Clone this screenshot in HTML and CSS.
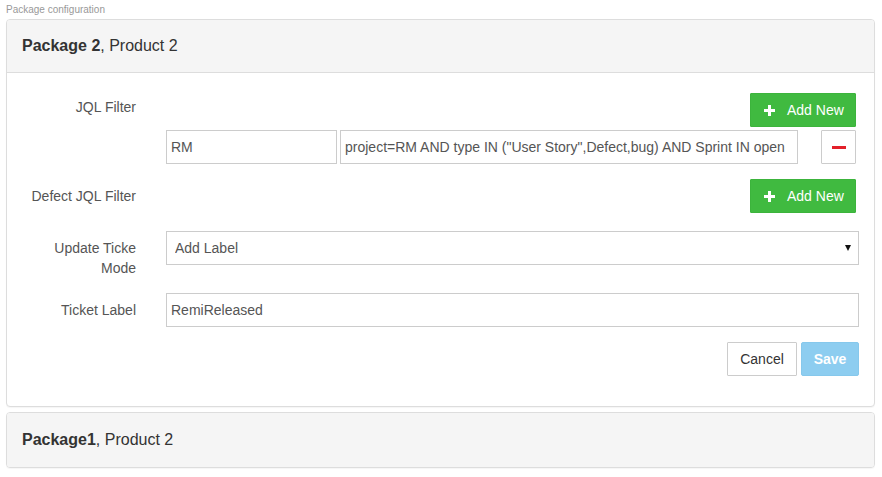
FILE: index.html
```html
<!DOCTYPE html>
<html>
<head>
<meta charset="utf-8">
<link rel="stylesheet" href="styles.css">
</head>
<body>
<div class="page">
  <div class="caption">Package configuration</div>
  <div class="panel">
    <div class="panel-heading"><b>Package 2</b>, Product 2</div>
    <div class="panel-body">
      <div class="row row-jql">
        <label class="label label-jql">JQL Filter</label>
        <div class="control control-end">
          <button class="btn btn-add"><span class="plus"></span>Add New</button>
        </div>
      </div>
      <div class="row row-sub">
        <span></span>
        <div class="control control-split">
          <div class="pair">
            <input class="input input-key" type="text" value="RM">
            <input class="input input-query" type="text" value='project=RM AND type IN ("User Story",Defect,bug) AND Sprint IN open'>
          </div>
          <button class="btn btn-remove"><span class="minus"></span></button>
        </div>
      </div>
      <div class="row row-defect">
        <label class="label">Defect JQL Filter</label>
        <div class="control control-end">
          <button class="btn btn-add"><span class="plus"></span>Add New</button>
        </div>
      </div>
      <div class="row row-mode">
        <label class="label">Update Ticke Mode</label>
        <div class="control select-wrap">
          <select class="input select">
            <option>Add Label</option>
          </select>
          <span class="caret"></span>
        </div>
      </div>
      <div class="row row-ticket">
        <label class="label">Ticket Label</label>
        <div class="control">
          <input class="input input-full" type="text" value="RemiReleased">
        </div>
      </div>
      <div class="actions">
        <button class="btn btn-cancel">Cancel</button>
        <button class="btn btn-save" disabled>Save</button>
      </div>
    </div>
  </div>
  <div class="panel">
    <div class="panel-heading collapsed"><b>Package1</b>, Product 2</div>
  </div>
</div>
</body>
</html>
```
FILE: styles.css
```css
* { box-sizing: border-box; }
html, body { margin: 0; padding: 0; background: #fff; }
body {
  font-family: "Liberation Sans", Arial, sans-serif;
  font-size: 14px;
  color: #333;
}
.page { padding: 0 7px 0 6px; }
.caption {
  height: 19px;
  line-height: 18px;
  padding-top: 1px;
  font-size: 10px;
  color: #999;
}
.panel {
  border: 1px solid #ddd;
  border-radius: 4px;
  background: #fff;
  margin-bottom: 5px;
  box-shadow: 0 1px 1px rgba(0,0,0,0.04);
}
.panel-heading {
  height: 53px;
  display: flex;
  align-items: center;
  padding: 0 15px 1px;
  background: #f5f5f5;
  border-bottom: 1px solid #ddd;
  border-radius: 3px 3px 0 0;
  font-size: 16px;
  color: #333;
}
.panel-heading.collapsed {
  height: 54px;
  border-bottom: 0;
  border-radius: 3px;
}
.panel-body { padding: 20px 15px 30px 15px; }
.row {
  display: grid;
  grid-template-columns: 114px 1fr;
  column-gap: 30px;
}
.row-sub { margin-top: 3px; }
.row-defect { margin-top: 15px; }
.row-mode { margin-top: 18px; }
.row-ticket { margin-top: 15px; }
.label {
  text-align: right;
  color: #555;
  line-height: 20px;
  padding-top: 7px;
}
.label-jql { padding-top: 4px; }
.control { min-width: 0; }
.control-end { display: flex; justify-content: flex-end; padding-right: 3px; }
.control-split { display: flex; justify-content: space-between; padding-right: 3px; }
.pair { display: flex; gap: 3px; }
.input {
  height: 34px;
  border: 1px solid #ccc;
  border-radius: 0;
  padding: 0 4px;
  font-family: "Liberation Sans", Arial, sans-serif;
  font-size: 14px;
  color: #555;
  background: #fff;
  outline: none;
}
.input-key { width: 171px; }
.input-query { width: 458px; }
.input-full { width: 100%; }
.select-wrap { position: relative; }
.select {
  width: 100%;
  -webkit-appearance: none;
  appearance: none;
  padding-left: 8px;
}
.caret {
  position: absolute;
  right: 8px;
  top: 14px;
  width: 0;
  height: 0;
  border-left: 3px solid transparent;
  border-right: 3px solid transparent;
  border-top: 6px solid #111;
}
.btn {
  height: 34px;
  border: 1px solid transparent;
  border-radius: 1px;
  font-family: "Liberation Sans", Arial, sans-serif;
  font-size: 14px;
  padding: 0;
  cursor: pointer;
  display: inline-flex;
  align-items: center;
  justify-content: center;
}
.btn-add {
  width: 106px;
  background: #40ba40;
  border-color: #3cb43c;
  color: #fff;
  justify-content: flex-start;
  padding-left: 13px;
}
.plus {
  position: relative;
  width: 11px;
  height: 11px;
  margin-right: 12px;
  margin-top: 1px;
}
.plus::before, .plus::after {
  content: "";
  position: absolute;
  background: #fff;
}
.plus::before { left: 0; top: 4px; width: 11px; height: 3px; }
.plus::after { left: 4px; top: 0; width: 3px; height: 11px; }
.btn-remove {
  width: 35px;
  background: #fff;
  border-color: #ccc;
}
.minus {
  display: block;
  width: 14px;
  height: 3px;
  background: #e3202a;
}
.actions {
  display: flex;
  justify-content: flex-end;
  gap: 4px;
  margin-top: 15px;
}
.btn-cancel {
  width: 70px;
  background: #fff;
  border-color: #ccc;
  color: #333;
}
.btn-save {
  width: 58px;
  background: #8dcdf0;
  border-color: #86c8ec;
  color: #fff;
  font-weight: bold;
  border-radius: 2px;
}
```
